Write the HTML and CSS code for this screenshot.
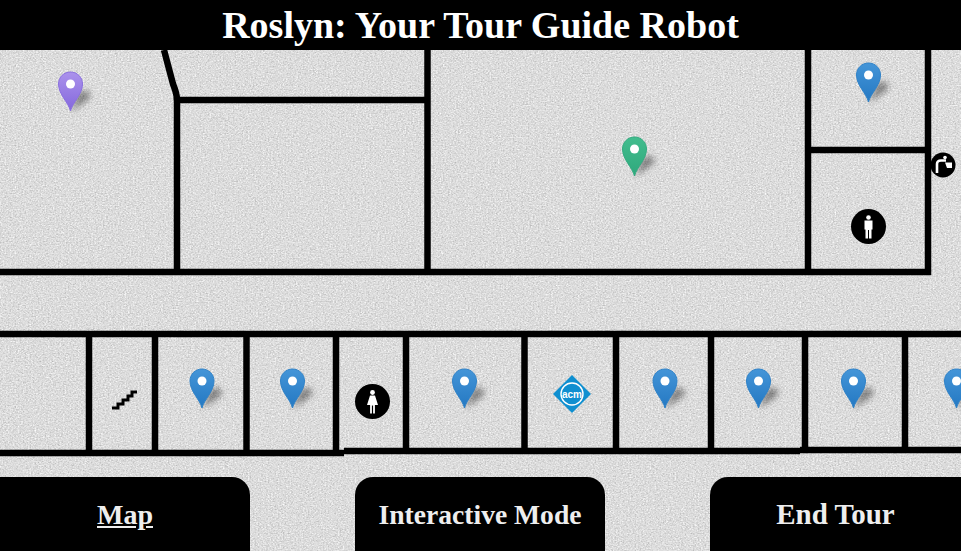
FILE: index.html
```html
<!DOCTYPE html>
<html lang="en">
<head>
<meta charset="utf-8">
<title>Roslyn: Your Tour Guide Robot</title>
<link rel="stylesheet" href="styles.css">
</head>
<body>
<div class="page">
  <svg class="map" width="961" height="551" viewBox="0 0 961 551" xmlns="http://www.w3.org/2000/svg" aria-label="Floor map">
    <defs>
      <filter id="paper" x="0" y="0" width="100%" height="100%" color-interpolation-filters="sRGB">
        <feTurbulence type="fractalNoise" baseFrequency="0.6 0.75" numOctaves="2" seed="7"/>
        <feColorMatrix type="matrix" values="0.23 0.23 0 0 0.63  0.23 0.23 0 0 0.63  0.23 0.23 0 0 0.63  0 0 0 0 1"/>
      </filter>
      <filter id="soft" x="-60%" y="-60%" width="220%" height="220%"><feGaussianBlur stdDeviation="3.2"/></filter>
      <linearGradient id="gBlue" x1="0" y1="0" x2="0" y2="1"><stop offset="0" stop-color="#4495d8"/><stop offset="1" stop-color="#2478c2"/></linearGradient>
      <linearGradient id="gPurple" x1="0" y1="0" x2="0" y2="1"><stop offset="0" stop-color="#ab92ec"/><stop offset="1" stop-color="#8468dc"/></linearGradient>
      <linearGradient id="gGreen" x1="0" y1="0" x2="0" y2="1"><stop offset="0" stop-color="#42bd8e"/><stop offset="1" stop-color="#2fa87c"/></linearGradient>
      <symbol id="shadow" overflow="visible">
        <path class="pin-shadow" d="M13 40 L29 29 Q35 24 30 20 Q25 18 20 22 Z" filter="url(#soft)"/>
      </symbol>
      <path id="pinShape" d="M12.5 39.5 C10.5 31 0.5 23 0.5 12.5 C0.5 5.5 6 0.5 12.5 0.5 C19 0.5 24.5 5.5 24.5 12.5 C24.5 23 14.5 31 12.5 39.5 Z"/>
      <symbol id="pinBlue" overflow="visible"><use href="#shadow"/><use href="#pinShape" fill="url(#gBlue)" class="edge-blue"/><circle class="pin-dot" cx="12.5" cy="12.5" r="4.5"/></symbol>
      <symbol id="pinPurple" overflow="visible"><use href="#shadow"/><use href="#pinShape" fill="url(#gPurple)" class="edge-purple"/><circle class="pin-dot" cx="12.5" cy="12.5" r="4.5"/></symbol>
      <symbol id="pinGreen" overflow="visible"><use href="#shadow"/><use href="#pinShape" fill="url(#gGreen)" class="edge-green"/><circle class="pin-dot" cx="12.5" cy="12.5" r="4.5"/></symbol>
    </defs>

    <rect width="961" height="551" filter="url(#paper)"/>

    <g class="walls">
      <path class="curve" d="M164 50 L173 84 Q177 94 177 100"/>
      <path d="M177 97V272"/>
      <path d="M177 100H427"/>
      <path d="M427.5 50V272"/>
      <path d="M808 50V272"/>
      <path d="M928 50V275"/>
      <path d="M808 150H928"/>
      <path d="M0 272H931"/>
      <path d="M0 334H961"/>
      <path d="M0 453H344"/>
      <path d="M344 451H800"/>
      <path d="M800 450H961"/>
      <path d="M89 334V453"/>
      <path d="M155 334V453"/>
      <path d="M246.5 334V453"/>
      <path d="M336 334V453"/>
      <path d="M406 334V451"/>
      <path d="M524.5 334V451"/>
      <path d="M616 334V451"/>
      <path d="M711 334V451"/>
      <path d="M805 334V451"/>
      <path d="M905 334V450"/>
    </g>

    <path class="stairs" d="M112 408H118V404H123V400H128V396H132V392H137"/>

    <use href="#pinPurple" x="58" y="71.5"/>
    <use href="#pinGreen" x="622" y="136.5"/>
    <use href="#pinBlue" x="856" y="62.5"/>
    <use href="#pinBlue" x="189.5" y="368.5"/>
    <use href="#pinBlue" x="280" y="368.5"/>
    <use href="#pinBlue" x="452" y="368.5"/>
    <use href="#pinBlue" x="652.5" y="368.5"/>
    <use href="#pinBlue" x="746" y="368.5"/>
    <use href="#pinBlue" x="841" y="368.5"/>
    <use href="#pinBlue" x="944" y="368.5"/>

    <g transform="translate(868.5 226.5)">
      <circle class="disc" r="17.5"/>
      <circle class="glyph" cy="-9" r="2.3"/>
      <path class="glyph" d="M-4 -6H4V3H3V12H0.5V3.5H-0.5V12H-3V3H-4Z"/>
    </g>
    <g transform="translate(372.5 401.5)">
      <circle class="disc" r="17.5"/>
      <circle class="glyph" cy="-9" r="2.4"/>
      <path class="glyph" d="M-2.5 -6H2.5L5.5 3.5H2.4V12H0.6V4H-0.6V12H-2.4V3.5H-5.5Z"/>
    </g>
    <g transform="translate(943 165)">
      <circle class="disc" r="12.5"/>
      <circle class="glyph" cx="2" cy="-7.5" r="1.8"/>
      <path class="fountain" d="M-6 8V-1Q-6 -4.5 -2 -4.5H3"/>
      <path class="glyph" d="M2 -2.5H9V3H4Z"/>
    </g>
    <g transform="translate(572 394)">
      <path class="acm-diamond" d="M0 -19L19 0L0 19L-19 0Z"/>
      <circle class="acm-ring" r="11"/>
      <text class="acm-text" y="3.5" text-anchor="middle">acm</text>
    </g>
  </svg>

  <header class="title-bar"><h1 class="title">Roslyn: Your Tour Guide Robot</h1></header>

  <nav class="actions">
    <a class="action action-left current" href="#">Map</a>
    <a class="action action-mid" href="#">Interactive Mode</a>
    <a class="action action-right" href="#">End Tour</a>
  </nav>
</div>
</body>
</html>
```
FILE: styles.css
```css
* { box-sizing: border-box; }
html, body { margin: 0; padding: 0; background: #dcdcdc; }
body { overflow: hidden; }

.page {
  position: relative;
  width: 961px;
  height: 551px;
  display: flex;
  flex-direction: column;
  justify-content: space-between;
  font-family: "Liberation Serif", "Times New Roman", serif;
  overflow: hidden;
}

.map { position: absolute; left: 0; top: 0; display: block; }

.title-bar {
  position: relative;
  height: 50px;
  background: #000;
  display: flex;
  align-items: center;
  justify-content: center;
}
.title {
  margin: 0;
  font-size: 38px;
  line-height: 50px;
  font-weight: 700;
  color: #fff;
  white-space: nowrap;
}

.actions {
  position: relative;
  display: flex;
  justify-content: space-between;
  height: 74px;
}
.action {
  width: 250px;
  background: #000;
  color: #eee;
  font-size: 28px;
  font-weight: 700;
  text-decoration: none;
  display: flex;
  align-items: center;
  justify-content: center;
  padding-top: 1px;
}
.action-left { border-top-right-radius: 18px; }
.action-mid { font-size: 27.6px; border-top-left-radius: 18px; border-top-right-radius: 18px; }
.action-right { width: 251px; font-size: 29px; border-top-left-radius: 18px; }
.current { text-decoration: underline; }

.walls path { fill: none; stroke: #000; stroke-width: 6.5; }
.stairs { fill: none; stroke: #000; stroke-width: 3; }
.pin-shadow { fill: rgba(0, 0, 0, 0.42); }
.pin-dot { fill: #fff; }
.edge-blue { stroke: #2f82c8; stroke-width: 1; }
.edge-purple { stroke: #8a6fe0; stroke-width: 1; }
.edge-green { stroke: #33ab80; stroke-width: 1; }
.disc { fill: #000; }
.glyph { fill: #fff; }
.fountain { fill: none; stroke: #fff; stroke-width: 2.6; }
.acm-diamond { fill: #0f8fd0; }
.acm-ring { fill: #0f8fd0; stroke: #fff; stroke-width: 1.4; }
.acm-text { fill: #fff; font-family: "Liberation Sans", Arial, sans-serif; font-size: 10px; font-weight: 700; }
```
